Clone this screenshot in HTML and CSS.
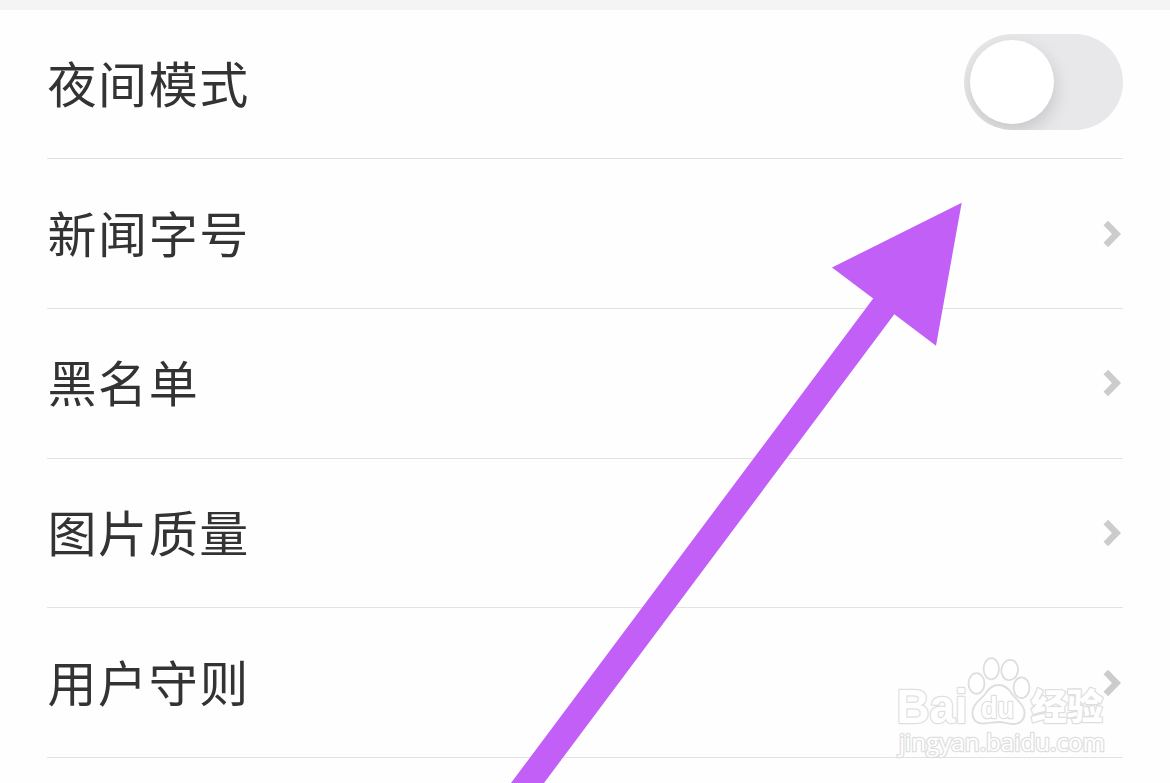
FILE: index.html
```html
<!DOCTYPE html>
<html lang="zh-CN">
<head>
    <meta charset="UTF-8">
    <meta name="viewport" content="width=device-width, initial-scale=1.0">
    <title>设置</title>
    <link rel="stylesheet" href="styles.css">
</head>
<body>
    <div class="top-bar"></div>

    <div class="settings">
        <div class="row">
            <span class="label">夜间模式</span>
            <div class="switch"><div class="knob"></div></div>
        </div>
        <div class="row">
            <span class="label">新闻字号</span>
            <svg class="chevron" viewBox="0 0 20 30"><path d="M2.8 4 L13.5 15 L2.8 26"/></svg>
        </div>
        <div class="row">
            <span class="label">黑名单</span>
            <svg class="chevron" viewBox="0 0 20 30"><path d="M2.8 4 L13.5 15 L2.8 26"/></svg>
        </div>
        <div class="row">
            <span class="label">图片质量</span>
            <svg class="chevron" viewBox="0 0 20 30"><path d="M2.8 4 L13.5 15 L2.8 26"/></svg>
        </div>
        <div class="row">
            <span class="label">用户守则</span>
            <svg class="chevron" viewBox="0 0 20 30"><path d="M2.8 4 L13.5 15 L2.8 26"/></svg>
        </div>
    </div>

    <!-- arrow pointing at the switch -->
    <svg class="arrow" viewBox="0 0 1170 783">
        <polygon points="961.7,202.7 936,345.7 894.3,314.3 544,783 511,783 873.2,298.4 832,267.5"/>
    </svg>

    <svg class="watermark" viewBox="0 0 240 125">
        <text class="brand" x="11.5" y="77.5" textLength="71" lengthAdjust="spacingAndGlyphs">Bai</text>
        <ellipse cx="91.5" cy="38.5" rx="8" ry="10.3"/>
        <ellipse cx="106.3" cy="23.7" rx="7.7" ry="10.6"/>
        <ellipse cx="124.7" cy="25" rx="8.3" ry="10.2" transform="rotate(8 124.7 25)"/>
        <ellipse cx="136.5" cy="42.7" rx="8" ry="10.3"/>
        <path d="M113.5 40 C107 40 103.5 44 101 48 C97 54 88 58 87.5 67 C87 75 92 79 99 78.5 C106 78 109 77 114 77 C119 77 122 79 128 79 C135 79 140 75 139.5 67 C139 59 131 55 127 49 C124 44 120 40 113.5 40 Z"/>
        <text class="du" x="96" y="72.5" textLength="33" lengthAdjust="spacingAndGlyphs">du</text>
        <text class="jingyan" x="146" y="75" textLength="72" lengthAdjust="spacingAndGlyphs">经验</text>
        <text class="url" x="14" y="105.5" textLength="206" lengthAdjust="spacingAndGlyphs">jingyan.baidu.com</text>
    </svg>
</body>
</html>
```

FILE: styles.css
```css
* {
    box-sizing: border-box;
}
body {
    position: relative;
    margin: 0;
    height: 783px;
    overflow: hidden;
    background: #fefefe;
    font-family: "Noto Sans CJK SC", sans-serif;
}
.top-bar {
    height: 9.5px;
    background: #f4f4f4;
}
.settings {
    padding: 0 47px;
}
.row {
    display: flex;
    align-items: center;
    justify-content: space-between;
    height: 149.7px;
    border-bottom: 1px solid #e2e2e2;
}
.label {
    margin-bottom: 4px;
    padding-left: 0.5px;
    color: #333;
    font-size: 49px;
    line-height: 72px;
    letter-spacing: 1.6px;
}
.switch {
    width: 159px;
    height: 96px;
    margin-bottom: 4.5px;
    padding: 6px;
    border-radius: 48px;
    background: #e8e8ea;
    overflow: hidden;
}
.knob {
    width: 84px;
    height: 84px;
    border-radius: 50%;
    background: #fff;
    box-shadow: 1px 7px 18px rgba(0,0,0,0.15);
}
.chevron {
    width: 20px;
    height: 30px;
}
.chevron path {
    fill: none;
    stroke: #ccc;
    stroke-width: 6.5;
}
.arrow {
    position: absolute;
    top: 0;
    left: 0;
    width: 1170px;
    height: 783px;
}
.arrow polygon {
    fill: #c25ff7;
}
.watermark {
    position: absolute;
    left: 885px;
    top: 645px;
    width: 240px;
    height: 125px;
}
.watermark ellipse,
.watermark path {
    fill: #fff;
    stroke: #dedede;
    stroke-width: 1.8;
}
.watermark text {
    fill: #fff;
    stroke: #dfdfdf;
    stroke-width: 2.6;
    stroke-linejoin: round;
    paint-order: stroke;
}
.brand {
    font: bold 48px "Liberation Sans", sans-serif;
}
.du {
    font: bold 30px "Liberation Sans", sans-serif;
}
.jingyan {
    font: 900 36px "Noto Sans CJK SC", sans-serif;
}
.url {
    font: 23px "Open Sans", sans-serif;
}
```
